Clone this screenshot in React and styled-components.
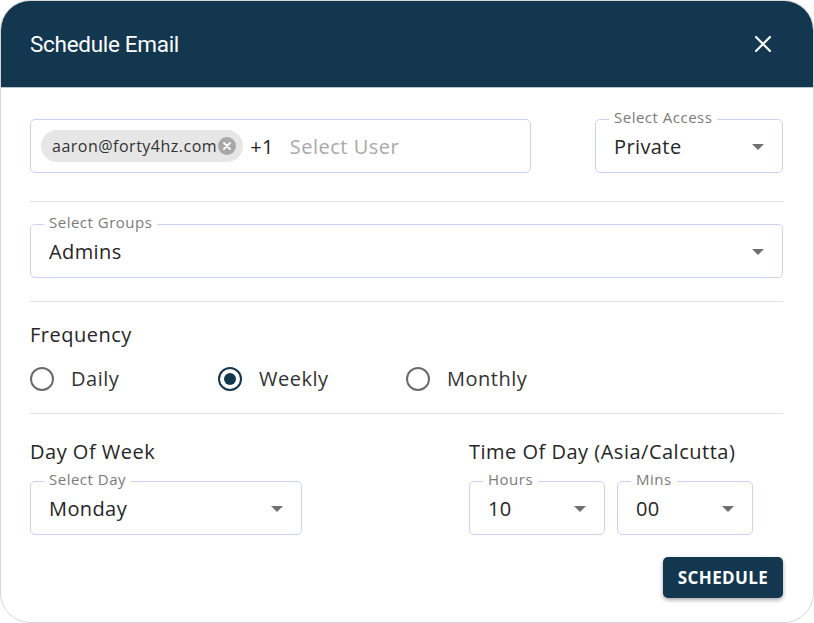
import React from 'react';
import styled, { createGlobalStyle } from 'styled-components';

const GlobalStyle = createGlobalStyle`
  html, body {
    margin: 0;
    padding: 0;
    background: #ffffff;
  }
  body {
    font-family: 'Open Sans', 'Lato', sans-serif;
    color: #222;
  }
`;

const navy = '#12374f';

const Modal = styled.div`
  width: 814px;
  height: 623px;
  box-sizing: border-box;
  border-radius: 30px;
  overflow: hidden;
  background: #fff;
  border: 1px solid #d6d6d6;
  display: flex;
  flex-direction: column;
`;

const Header = styled.div`
  height: 86px;
  flex: none;
  background: ${navy};
  border-bottom: 1px solid #b9c3cb;
  display: flex;
  align-items: center;
  justify-content: space-between;
  padding: 0 42px 0 29px;
  color: #fff;
`;

const Title = styled.div`
  font-family: 'Roboto', sans-serif;
  font-size: 22.5px;
  letter-spacing: -0.3px;
`;

const Body = styled.div`
  padding: 31px 30px 0 29px;
  display: flex;
  flex-direction: column;
`;

const Row = styled.div`
  display: flex;
  justify-content: space-between;
  align-items: flex-start;
  gap: ${(p) => p.gap || 0}px;
`;

const Divider = styled.div`
  height: 1px;
  background: #e3e3e3;
  margin: ${(p) => p.top}px 0 ${(p) => p.bottom}px 0;
`;

const Box = styled.div`
  position: relative;
  box-sizing: border-box;
  width: ${(p) => (p.width ? `${p.width}px` : '100%')};
  height: 54px;
  border: 1px solid #c9d2f6;
  border-radius: 5px;
  display: flex;
  align-items: center;
  padding: 0 18px 0 18px;
`;

const FloatLabel = styled.span`
  position: absolute;
  top: -11px;
  left: 13px;
  padding: 0 5px;
  background: #fff;
  font-size: 15px;
  line-height: 16px;
  letter-spacing: 0.5px;
  color: #7a7a7a;
`;

const Value = styled.span`
  flex: 1;
  font-size: 20px;
  letter-spacing: 0.4px;
  color: #262626;
`;

const Arrow = styled.span`
  width: 0;
  height: 0;
  border-left: 6.5px solid transparent;
  border-right: 6.5px solid transparent;
  border-top: 6.5px solid #707070;
  margin-top: 1px;
`;

const Chip = styled.span`
  display: inline-flex;
  align-items: center;
  height: 32px;
  border-radius: 16px;
  background: #e6e6e6;
  padding: 0 7px 0 11px;
  font-size: 16px;
  letter-spacing: 0.5px;
  color: #333;
  margin-left: -8px;
`;

const ChipClose = styled.span`
  width: 18px;
  height: 18px;
  border-radius: 50%;
  background: #a8a8a8;
  margin-left: 1px;
  display: inline-flex;
  align-items: center;
  justify-content: center;
`;

const Extra = styled.span`
  font-size: 20px;
  letter-spacing: 0.4px;
  color: #222;
  margin-left: 7px;
`;

const Placeholder = styled.span`
  font-size: 20px;
  letter-spacing: 0.5px;
  color: #a9a9a9;
  margin-left: 16px;
`;

const SectionTitle = styled.div`
  font-size: 20px;
  letter-spacing: 0.5px;
  line-height: 24px;
  color: #262626;
`;

const RadioRow = styled.div`
  display: flex;
  margin-top: 20px;
`;

const RadioItem = styled.label`
  width: 188px;
  display: flex;
  align-items: center;
  gap: 17px;
  font-size: 20px;
  letter-spacing: 0.5px;
  line-height: 24px;
  color: #333;
`;

const RadioCircle = styled.span`
  box-sizing: border-box;
  width: 24px;
  height: 24px;
  border-radius: 50%;
  border: 2px solid ${(p) => (p.checked ? navy : '#6b6b6b')};
  display: flex;
  align-items: center;
  justify-content: center;
  &::after {
    content: '';
    width: 12px;
    height: 12px;
    border-radius: 50%;
    background: ${navy};
    display: ${(p) => (p.checked ? 'block' : 'none')};
  }
`;

const Column = styled.div`
  display: flex;
  flex-direction: column;
  gap: 17px;
`;

const Footer = styled.div`
  display: flex;
  justify-content: flex-end;
  margin-top: 22px;
`;

const Button = styled.button`
  height: 41px;
  width: 120px;
  border: none;
  border-radius: 5px;
  background: ${navy};
  color: #fff;
  font-family: 'Open Sans', sans-serif;
  font-weight: 700;
  font-size: 17px;
  letter-spacing: 0.4px;
  box-shadow: 0 2px 4px rgba(0, 0, 0, 0.35);
`;

const Select = ({ label, value, width }) => (
  <Box width={width}>
    <FloatLabel>{label}</FloatLabel>
    <Value>{value}</Value>
    <Arrow />
  </Box>
);

const Radio = ({ label, checked }) => (
  <RadioItem>
    <RadioCircle checked={checked} />
    {label}
  </RadioItem>
);

export default function App() {
  return (
    <>
      <GlobalStyle />
      <Modal>
        <Header>
          <Title>Schedule Email</Title>
          <svg width="16" height="16" viewBox="0 0 16 16">
            <path d="M1 1 L15 15 M15 1 L1 15" stroke="#fff" strokeWidth="2.2" strokeLinecap="round" />
          </svg>
        </Header>
        <Body>
          <Row>
            <Box width={501}>
              <Chip>
                aaron@forty4hz.com
                <ChipClose>
                  <svg width="8" height="8" viewBox="0 0 8 8">
                    <path d="M1 1 L7 7 M7 1 L1 7" stroke="#fff" strokeWidth="1.8" strokeLinecap="round" />
                  </svg>
                </ChipClose>
              </Chip>
              <Extra>+1</Extra>
              <Placeholder>Select User</Placeholder>
            </Box>
            <Select label="Select Access" value="Private" width={188} />
          </Row>
          <Divider top={28} bottom={22} />
          <Select label="Select Groups" value="Admins" />
          <Divider top={23} bottom={21} />
          <SectionTitle>Frequency</SectionTitle>
          <RadioRow>
            <Radio label="Daily" />
            <Radio label="Weekly" checked />
            <Radio label="Monthly" />
          </RadioRow>
          <Divider top={22} bottom={26} />
          <Row>
            <Column>
              <SectionTitle>Day Of Week</SectionTitle>
              <Select label="Select Day" value="Monday" width={272} />
            </Column>
            <Column style={{ marginRight: 30 }}>
              <SectionTitle>Time Of Day (Asia/Calcutta)</SectionTitle>
              <Row gap={12}>
                <Select label="Hours" value="10" width={136} />
                <Select label="Mins" value="00" width={136} />
              </Row>
            </Column>
          </Row>
          <Footer>
            <Button>SCHEDULE</Button>
          </Footer>
        </Body>
      </Modal>
    </>
  );
}
